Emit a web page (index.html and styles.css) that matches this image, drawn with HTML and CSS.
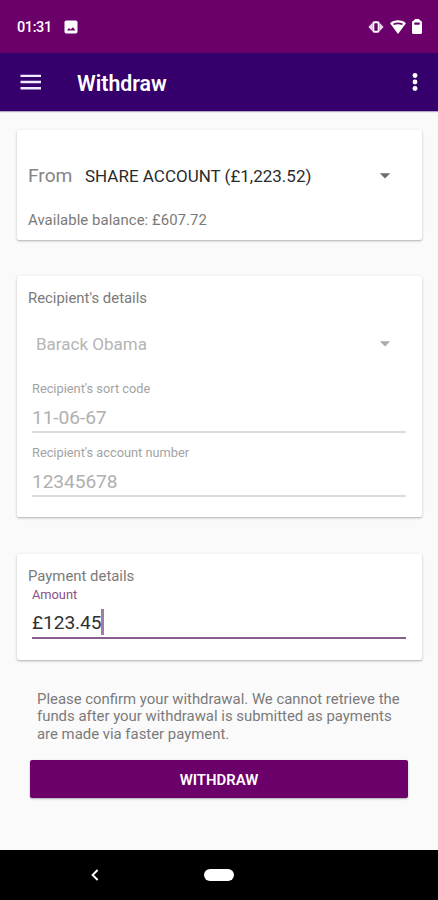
FILE: index.html
```html
<!DOCTYPE html>
<html lang="en">
<head>
<meta charset="utf-8">
<title>Withdraw</title>
<link rel="stylesheet" href="styles.css">
</head>
<body>
<div class="status">
  <span class="time">01:31</span>
  <svg class="picture" width="14" height="14" viewBox="0 0 14 14"><rect x="0.5" y="0.5" width="13" height="13" rx="1.8" fill="#fff"/><path d="M2.900 10.400 5 8l1.600 1.500L9 7.200l2.400 3.200z" fill="#6b006b"/></svg>
  <div class="status-icons">
    <svg width="16" height="14" viewBox="0 0 16 14"><path d="M4.200 3 .4 7l3.800 4zM11.800 3l3.800 4-3.800 4z" fill="#ecd5ec"/><rect x="5.300" y="2.300" width="5.400" height="9.400" rx="1.200" fill="none" stroke="#fff" stroke-width="2"/></svg>
    <svg width="16" height="14" viewBox="0 0 16 14"><path d="M0 3.200C4.500-.6 11.500-.6 16 3.200L8 14z" fill="#fff"/><path d="M3 3.800q5-2.500 10 0l-.9 1.200q-4.100-1.500-8.200 0z" fill="#6b006b"/></svg>
    <svg width="10" height="15" viewBox="0 0 10 15"><path d="M3.200 0h3.600L8.500 1.800q1.500 0 1.500 1.500v10.200q0 1.500-1.500 1.500h-7Q0 15 0 13.500V3.300q0-1.500 1.500-1.500z" fill="#fff"/><rect x="2.200" y="3.600" width="5.600" height="2.200" rx=".8" fill="#6b006b"/></svg>
  </div>
</div>
<header class="appbar">
  <svg width="22" height="16" viewBox="0 0 22 16"><path d="M.5 1.900h20.500M.5 8h20.500M.5 14.200h20.500" stroke="#f1eaff" stroke-width="2.400"/></svg>
  <h1>Withdraw</h1>
  <svg class="more" width="6" height="20" viewBox="0 0 6 20"><g fill="#fff"><circle cx="3" cy="3.500" r="2.450"/><circle cx="3" cy="10" r="2.450"/><circle cx="3" cy="16.500" r="2.450"/></g></svg>
</header>
<main>
  <section class="card from-card">
    <div class="account">
      <span class="from">From</span>
      <span class="account-name">SHARE ACCOUNT (£1,223.52)</span>
      <svg class="arrow" width="12" height="6" viewBox="0 0 12 6"><path d="M.8.200h10.400L6 5.600z" fill="#6d6d6d"/></svg>
    </div>
    <p class="balance">Available balance: £607.72</p>
  </section>
  <section class="card recipient-card">
    <h2>Recipient's details</h2>
    <div class="recipient">
      <span>Barack Obama</span>
      <svg class="arrow" width="12" height="6" viewBox="0 0 12 6"><path d="M.8.200h10.400L6 5.600z" fill="#ababab"/></svg>
    </div>
    <div class="field">
      <label>Recipient's sort code</label>
      <div class="value">11-06-67</div>
    </div>
    <div class="field">
      <label>Recipient's account number</label>
      <div class="value">12345678</div>
    </div>
  </section>
  <section class="card payment-card">
    <h2>Payment details</h2>
    <div class="field active">
      <label>Amount</label>
      <div class="value">£123.45<i class="caret"></i></div>
    </div>
  </section>
  <p class="notice">Please confirm your withdrawal. We cannot retrieve the funds after your withdrawal is submitted as payments are made via faster payment.</p>
  <button class="submit">WITHDRAW</button>
</main>
<nav class="navbar">
  <svg width="8" height="12" viewBox="0 0 8 12"><path d="M6.600 1 1.600 6l5 5" fill="none" stroke="#fff" stroke-width="1.900"/></svg>
  <span class="pill"></span>
</nav>
</body>
</html>
```
FILE: styles.css
```css
* { box-sizing: border-box; }

body {
  margin: 0;
  width: 438px;
  height: 900px;
  overflow: hidden;
  display: flex;
  flex-direction: column;
  font-family: Roboto, sans-serif;
  background: #fafafa;
  color: #7a7a7a;
}

h1, h2, p { margin: 0; font-weight: 400; }
svg { display: block; flex: none; }

.status {
  height: 53px;
  padding: 0 16px 0 17px;
  display: flex;
  align-items: center;
  background: #6b006b;
}
.time {
  width: 47px;
  padding-top: 1px;
  color: #fff;
  font-size: 14.5px;
  font-weight: 500;
  letter-spacing: -.4px;
}
.status-icons {
  margin-left: auto;
  display: flex;
  align-items: center;
  gap: 6px;
}

.appbar {
  height: 58px;
  padding: 0 20px;
  display: flex;
  align-items: center;
  background: #35006b;
  box-shadow: 0 1px 1px #b5a6c4;
}
.appbar h1 {
  margin-left: 35px;
  padding-top: 2px;
  color: #fff;
  font-size: 21.3px;
  font-weight: 600;
}
.more { margin-left: auto; }

main {
  flex: 1;
  padding: 19px 16px 0 17px;
  display: flex;
  flex-direction: column;
}

.card {
  flex: none;
  background: #fff;
  border-radius: 2px;
  box-shadow: 0 1px 3px rgba(0, 0, 0, .22), 0 1px 1px rgba(0, 0, 0, .1);
}
.card h2 {
  font-size: 14.9px;
  line-height: 18px;
  padding-left: 11px;
}

.from-card { height: 110px; padding: 34px 0 0 11px; }
.account { display: flex; align-items: center; height: 24px; }
.from { width: 57px; margin-top: -1px; font-size: 19.2px; color: #858585; }
.account-name { font-size: 17px; color: #2b2b2b; }
.arrow { margin-left: auto; margin-right: 31px; }
.balance {
  margin-top: 23px;
  font-size: 14.9px;
  line-height: 18px;
  letter-spacing: .06px;
}

.recipient-card { height: 241px; margin-top: 36px; padding-top: 13px; }
.recipient {
  height: 24px;
  margin: 25px 0 25px;
  padding-left: 19px;
  display: flex;
  align-items: center;
  font-size: 17px;
  color: #b5b5b5;
}

.field { margin: 0 16px 0 15px; height: 64px; }
.field label {
  display: block;
  font-size: 12.8px;
  line-height: 16px;
  color: #a3a3a3;
}
.value {
  height: 36px;
  padding-top: 9px;
  border-bottom: 2px solid #dcdcdc;
  font-size: 19.2px;
  line-height: 24px;
  letter-spacing: -.1px;
  color: #b0b0b0;
}

.payment-card { height: 106px; margin-top: 37px; padding-top: 13px; }
.active label { color: #8a4f8a; line-height: 19px; }
.active .value {
  display: flex;
  height: 35px;
  padding-top: 7px;
  border-bottom: 2px solid #88608e;
  color: #303030;
}
.caret { width: 3px; height: 26px; margin-top: -2px; background: #a47aab; }

.notice {
  margin: 31px 0 0 20px;
  width: 370px;
  font-size: 14.9px;
  line-height: 17.400px;
}
.submit {
  flex: none;
  width: 378px;
  height: 38px;
  margin: 17px 0 0 13px;
  padding: 1px 0 0;
  border: 0;
  border-radius: 2px;
  background: #6b006b;
  box-shadow: 0 1px 2px rgba(0, 0, 0, .3);
  color: #fff;
  font: 600 14.9px Roboto, sans-serif;
}

.navbar {
  height: 50px;
  padding-left: 91px;
  display: flex;
  align-items: center;
  background: #000;
}
.pill {
  width: 30px;
  height: 12px;
  margin-left: 105px;
  border-radius: 6px;
  background: #fff;
}
```
